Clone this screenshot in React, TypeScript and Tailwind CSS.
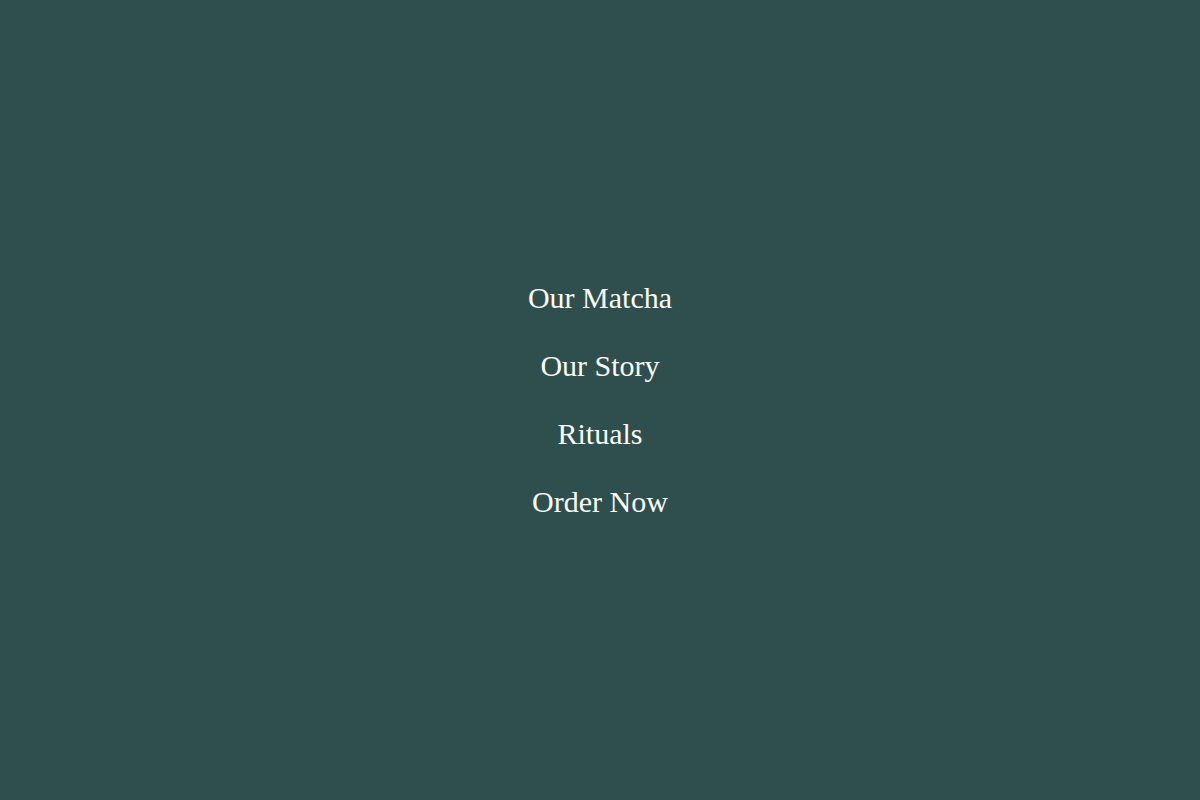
import * as React from "react";

const links = ["Our Matcha", "Our Story", "Rituals", "Order Now"];

export default function App() {
  return (
    <div className="flex h-screen w-full items-center justify-center bg-[#2f4f4f]">
      <nav className="mb-[2px] flex flex-col items-center gap-[23px]">
        {links.map((label) => (
          <a
            key={label}
            href="#"
            className="text-[30px] leading-[45px] text-[#fbfbf5] [font-family:'Liberation_Serif',serif]"
          >
            {label}
          </a>
        ))}
      </nav>
    </div>
  );
}
